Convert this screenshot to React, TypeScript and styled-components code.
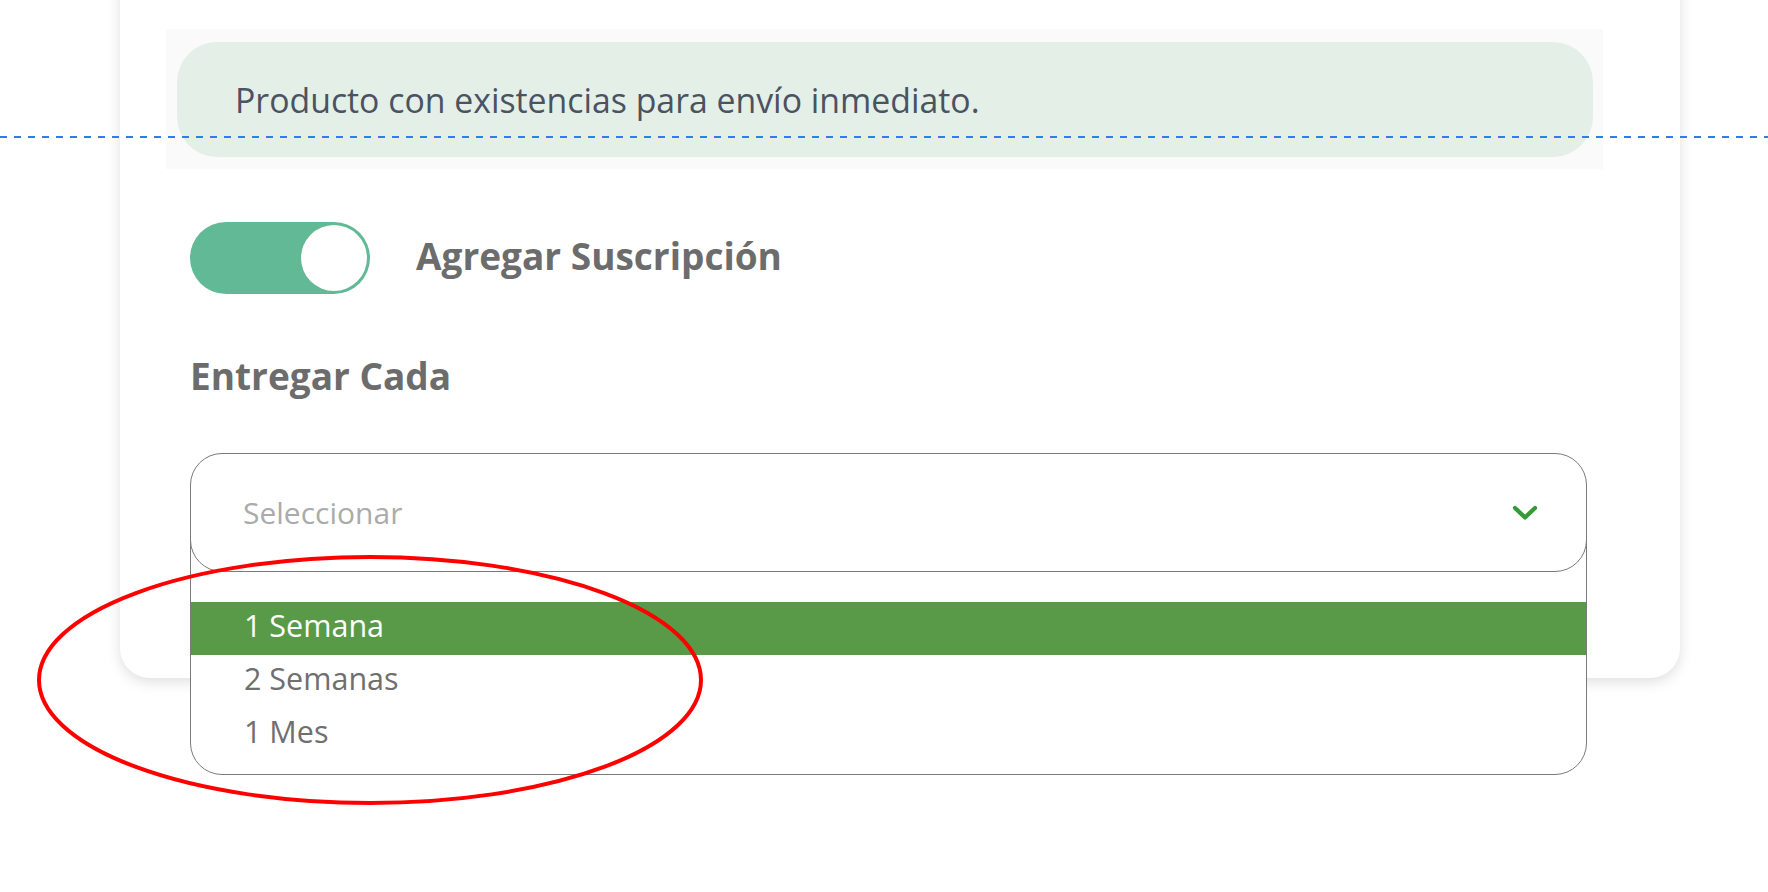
import React from 'react'
import styled, { createGlobalStyle } from 'styled-components'

const GlobalStyle = createGlobalStyle`
  html, body {
    margin: 0;
    padding: 0;
    background: #ffffff;
    overflow: hidden;
  }
  body {
    font-family: "Open Sans", "Noto Sans", sans-serif;
  }
`

const Page = styled.div`
  position: relative;
  width: 1768px;
  height: 892px;
  overflow: hidden;
`

const Card = styled.div`
  width: 1560px;
  margin: -30px 0 0 120px;
  padding: 59px 93px 106px 70px;
  box-sizing: border-box;
  background: #fff;
  border-radius: 0 0 30px 30px;
  box-shadow: 0 4px 14px rgba(0, 0, 0, 0.13);
`

const StockBand = styled.div`
  margin: 0 -16px 0 -24px;
  padding: 13px 10px 12px 11px;
  background: #fafafa;
`

const StockNotice = styled.div`
  height: 115px;
  display: flex;
  align-items: center;
  padding-left: 58px;
  box-sizing: border-box;
  border-radius: 40px;
  background: #e4f0e7;
  color: #4b5262;
  font-size: 33.8px;
`

const ToggleRow = styled.div`
  display: flex;
  align-items: center;
  gap: 46px;
  margin-top: 53px;
`

const Switch = styled.div<{ $on: boolean }>`
  width: 180px;
  height: 72px;
  border-radius: 36px;
  background: ${p => (p.$on ? '#61b995' : '#ccc')};
  display: flex;
  align-items: center;
  justify-content: ${p => (p.$on ? 'flex-end' : 'flex-start')};
  padding: 0 3px;
  box-sizing: border-box;
`

const Knob = styled.div`
  width: 66px;
  height: 66px;
  border-radius: 50%;
  background: #fff;
`

const Label = styled.div`
  color: #6c6c6c;
  font-size: 37px;
  font-weight: 700;
  line-height: 50px;
`

const ToggleLabel = styled(Label)`
  padding-bottom: 4px;
`

const SectionLabel = styled(Label)`
  margin-top: 57px;
`

const SelectWrap = styled.div`
  position: relative;
  margin-top: 52px;
`

const SelectBox = styled.div`
  position: relative;
  z-index: 2;
  height: 119px;
  display: flex;
  align-items: center;
  justify-content: space-between;
  padding: 0 48px 0 52px;
  box-sizing: border-box;
  border: 1px solid #7a7a7a;
  border-radius: 32px;
  background: #fff;
  color: #ababab;
  font-size: 30px;
`

const Options = styled.ul`
  position: absolute;
  z-index: 1;
  top: 60px;
  left: 0;
  right: 0;
  margin: 0;
  padding: 88px 0 13px;
  list-style: none;
  border: 1px solid #7a7a7a;
  border-radius: 0 0 32px 32px;
  background: #fff;
`

const Option = styled.li<{ $active?: boolean }>`
  height: 53px;
  display: flex;
  align-items: center;
  padding: 0 0 7px 53px;
  box-sizing: border-box;
  font-size: 30.5px;
  color: ${p => (p.$active ? '#fff' : '#6f6f6f')};
  background: ${p => (p.$active ? '#589a48' : 'transparent')};
`

const GuideLine = styled.div`
  position: absolute;
  left: 0;
  right: 0;
  top: 136px;
  height: 2px;
  background: repeating-linear-gradient(90deg, #2b7fec 0 7px, transparent 7px 14px);
  z-index: 5;
`

const Annotation = styled.svg`
  position: absolute;
  left: 0;
  top: 0;
  z-index: 6;
  pointer-events: none;
`

const Chevron = () => (
  <svg width="26" height="16" viewBox="0 0 26 16">
    <path d="M3 3 L13 12.5 L23 3" fill="none" stroke="#339c37" strokeWidth="4.2" strokeLinecap="round" strokeLinejoin="round" />
  </svg>
)

const options = ['1 Semana', '2 Semanas', '1 Mes']

export default function App() {
  return (
    <Page>
      <GlobalStyle />
      <Card>
        <StockBand>
          <StockNotice>Producto con existencias para envío inmediato.</StockNotice>
        </StockBand>
        <ToggleRow>
          <Switch $on>
            <Knob />
          </Switch>
          <ToggleLabel>Agregar Suscripción</ToggleLabel>
        </ToggleRow>
        <SectionLabel>Entregar Cada</SectionLabel>
        <SelectWrap>
          <SelectBox>
            <span>Seleccionar</span>
            <Chevron />
          </SelectBox>
          <Options>
            {options.map((o, i) => (
              <Option key={o} $active={i === 0}>{o}</Option>
            ))}
          </Options>
        </SelectWrap>
      </Card>
      <GuideLine />
      <Annotation width="1768" height="892">
        <ellipse cx="370" cy="680" rx="331" ry="123" fill="none" stroke="#ff0000" strokeWidth="4" />
      </Annotation>
    </Page>
  )
}
